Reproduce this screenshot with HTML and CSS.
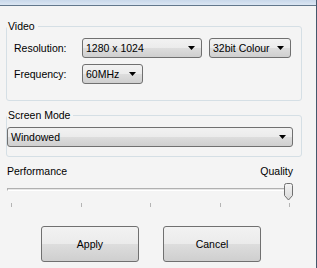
FILE: index.html
```html
<!DOCTYPE html>
<html lang="en">
<head>
  <meta charset="UTF-8" />
  <title>Display Settings</title>
  <link rel="stylesheet" href="styles.css">
</head>
<body>
  <div class="window">
    <div class="caption"></div>
    <div class="content">
      <fieldset class="group">
        <legend>Video</legend>
        <div class="row">
          <span class="label">Resolution:</span>
          <div class="combo res"><span>1280 x 1024</span><svg class="arrow" width="7" height="4"><path d="M0 0h7L3.5 4z" fill="#000"/></svg></div>
          <div class="combo depth"><span>32bit Colour</span><svg class="arrow" width="7" height="4"><path d="M0 0h7L3.5 4z" fill="#000"/></svg></div>
        </div>
        <div class="row">
          <span class="label">Frequency:</span>
          <div class="combo freq"><span>60MHz</span><svg class="arrow" width="7" height="4"><path d="M0 0h7L3.5 4z" fill="#000"/></svg></div>
        </div>
      </fieldset>

      <fieldset class="group mode">
        <legend>Screen Mode</legend>
        <div class="combo wide"><span>Windowed</span><svg class="arrow" width="7" height="4"><path d="M0 0h7L3.5 4z" fill="#000"/></svg></div>
      </fieldset>

      <div class="perf">
        <div class="perf-labels">
          <span>Performance</span>
          <span>Quality</span>
        </div>
        <div class="slider">
          <div class="track"></div>
          <svg class="thumb" width="11" height="18" viewBox="0 0 11 18">
            <defs>
              <linearGradient id="tg" x1="0" y1="0" x2="0" y2="1">
                <stop offset="0" stop-color="#f4f4f4"/>
                <stop offset="1" stop-color="#d8d8d8"/>
              </linearGradient>
            </defs>
            <path d="M1.5 2.5a2 2 0 0 1 2-2h4a2 2 0 0 1 2 2v10l-4 4.5l-4-4.5z" fill="url(#tg)" stroke="#707070"/>
          </svg>
        </div>
        <div class="ticks">
          <i></i><i></i><i></i><i></i><i></i>
        </div>
      </div>

      <div class="buttons">
        <button class="btn">Apply</button>
        <button class="btn">Cancel</button>
      </div>
    </div>
  </div>
</body>
</html>
```

FILE: styles.css
```css
html, body {
  margin: 0;
  padding: 0;
  background: #f4f4f4;
}
body {
  font-family: "Liberation Sans", Arial, sans-serif;
  font-size: 10.5px;
  color: #000;
}
.window {
  width: 316px;
  height: 268px;
  border-right: 1px solid #44586c;
  background: #f4f4f4;
  overflow: hidden;
}
.caption {
  height: 5px;
  background: linear-gradient(#c9d8ea, #dbe6f3);
  border-bottom: 1px solid #62778c;
}
.content {
  padding: 0 0 0 6px;
}
.group {
  width: 294px;
  margin: 14px 0 0 0;
  padding: 0;
  border: 1px solid #d5dfe5;
  border-radius: 3px;
}
.group legend {
  padding: 0 3px 0 1px;
  margin-left: 0;
  line-height: 13px;
}
.row {
  display: flex;
  align-items: center;
  padding-left: 7px;
  margin-top: 5px;
}
.row + .row {
  margin-top: 6px;
}
.row:last-child {
  margin-bottom: 16px;
}
.label {
  width: 68px;
}
.combo {
  box-sizing: border-box;
  height: 20px;
  display: flex;
  align-items: center;
  justify-content: space-between;
  padding: 0 6px 0 3px;
  border: 1px solid #707070;
  border-radius: 3px;
  background: linear-gradient(#f2f2f2 0%, #ebebeb 50%, #dddddd 51%, #cfcfcf 100%);
}
.combo .arrow {
  flex: none;
}
.res {
  width: 120px;
}
.depth {
  width: 82px;
  margin-left: 7px;
}
.freq {
  width: 61px;
}
.mode {
  margin-top: 8px;
}
.wide {
  width: 286px;
  margin: 5px 0 9px 0;
}
.perf {
  width: 286px;
  margin: 8px 0 0 1px;
}
.perf-labels {
  display: flex;
  justify-content: space-between;
  line-height: 13px;
}
.slider {
  position: relative;
  height: 18px;
  margin-top: 5px;
}
.track {
  position: absolute;
  left: 0;
  right: 2px;
  top: 5px;
  height: 1px;
  border-top: 1px solid #b0b0b0;
  border-left: 1px solid #b0b0b0;
  border-bottom: 1px solid #fff;
  background: #e6e6e6;
}
.thumb {
  position: absolute;
  right: -1px;
  top: 0;
}
.ticks {
  display: flex;
  justify-content: space-between;
  padding: 0 3px 0 4px;
  margin-top: 2px;
}
.ticks i {
  display: block;
  width: 1px;
  height: 4px;
  background: #b4b4b4;
}
.buttons {
  display: flex;
  gap: 24px;
  padding-left: 35px;
  margin-top: 19px;
}
.btn {
  box-sizing: border-box;
  width: 98px;
  height: 36px;
  font: inherit;
  color: #000;
  border: 1px solid #707070;
  border-radius: 3px;
  background: linear-gradient(#f2f2f2 0%, #ebebeb 50%, #dddddd 51%, #cfcfcf 100%);
}
```
